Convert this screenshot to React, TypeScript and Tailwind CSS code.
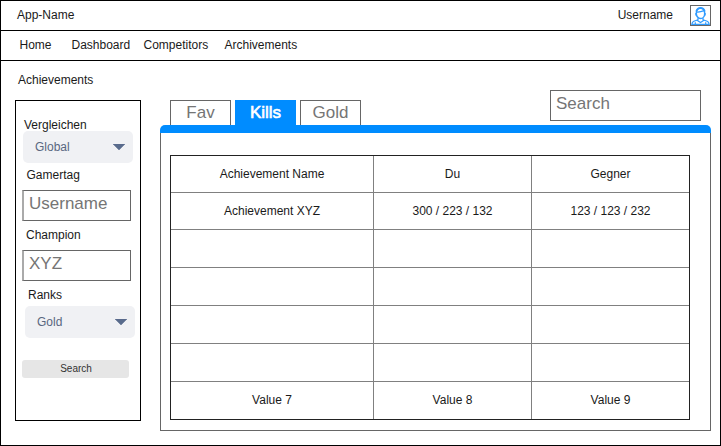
import type { ReactNode } from "react";

const rows = [
  ["Achievement Name", "Du", "Gegner"],
  ["Achievement XYZ", "300 / 223 / 132", "123 / 123 / 232"],
  ["", "", ""],
  ["", "", ""],
  ["", "", ""],
  ["", "", ""],
  ["Value 7", "Value 8", "Value 9"],
];

function UserIcon() {
  return (
    <svg viewBox="0 0 19 19" className="size-[19px]" fill="none" stroke="#2f9bff" strokeWidth="1.2">
      <ellipse cx="9.5" cy="7.4" rx="4.2" ry="5.2" strokeWidth="1.5" />
      <path d="M5.200 5.400C6 3 7.500 1.800 9.500 1.800s3.600 1.200 4.300 3.600" strokeWidth="1.700" />
      <path d="M5.600 6c2.600.2 5.200-.4 7.400-1.400" />
      <path d="M4.900 7v2.600M14.100 7v2.600" />
      <path d="M7 12v1.800l-4.200 1.500C1.600 15.800 1 16.800.8 18.400h17.400c-.2-1.600-.8-2.600-2-3.100L12 13.800V12" />
      <path d="M6 14.300l3.500 2.300 3.500-2.300M4.300 16.200v2.200M14.700 16.200v2.200" />
    </svg>
  );
}

function Select({ value, className }: { value: string; className: string }) {
  return (
    <div className={`flex items-center justify-between rounded-[5px] bg-[#f0f1f4] text-[#596780] ${className}`}>
      <span>{value}</span>
      <svg viewBox="0 0 12 6" className="h-[6px] w-[12px]" fill="#596b8c" stroke="#596b8c" strokeWidth="0.5">
        <path d="M0 0h12L6 6z" />
      </svg>
    </div>
  );
}

function Field({ value, className }: { value: string; className: string }) {
  return (
    <div className={`border border-[#666] bg-white px-[5px] text-[17px] leading-[25px] text-[#757575] ${className}`}>
      {value}
    </div>
  );
}

function Label({ className, children }: { className: string; children: ReactNode }) {
  return <div className={`leading-[14px] ${className}`}>{children}</div>;
}

export default function App() {
  return (
    <div className="flex h-[446px] w-[721px] flex-col border border-black bg-white font-['Liberation_Sans',Arial,sans-serif] text-[12px] text-[#1a1a1a]">
      <header className="flex h-[30px] shrink-0 items-center border-b border-black pr-[9px] pl-[16px]">
        <span className="pb-[2px]">App-Name</span>
        <span className="mr-[17px] ml-auto pb-[2px]">Username</span>
        <div className="size-[21px] border border-[#666]">
          <UserIcon />
        </div>
      </header>
      <nav className="flex h-[30px] shrink-0 items-center border-b border-black pb-[2px] pl-[18.5px]">
        <span className="w-[52px]">Home</span>
        <span className="w-[72px]">Dashboard</span>
        <span className="w-[81px]">Competitors</span>
        <span>Archivements</span>
      </nav>
      <main className="flex flex-1 pl-[14px]">
        <aside className="w-[126px] shrink-0">
          <h1 className="h-[39px] pl-[3px] leading-[38px]">Achievements</h1>
          <div className="h-[321px] border border-black pt-[17px]">
            <Label className="pl-[8px]">Vergleichen</Label>
            <Select value="Global" className="-mt-px ml-[7px] h-[32px] w-[110px] pr-[8px] pl-[12px]" />
            <Label className="mt-[5px] pl-[10.5px]">Gamertag</Label>
            <Field value="Username" className="mt-[8px] ml-[6px] h-[31px] w-[109px] border-l-2 border-l-[#aaa]" />
            <Label className="mt-[7px] pl-[10px]">Champion</Label>
            <Field value="XYZ" className="mt-[8px] ml-[6px] h-[31px] w-[109px] border-l-2 border-l-[#aaa]" />
            <Label className="mt-[7px] pl-[12px]">Ranks</Label>
            <Select value="Gold" className="mt-[4px] ml-[9px] h-[32px] w-[110px] pr-[8px] pl-[12px]" />
            <button className="mt-[22px] ml-[6px] block h-[18px] w-[107px] rounded-[3px] bg-[#e6e6e6] pl-px text-[10px] leading-[18px] text-[#333]">
              Search
            </button>
          </div>
        </aside>
        <section className="ml-[19px] w-[551px]">
          <div className="flex h-[64px] items-end pl-[10px] text-center text-[17px] leading-[25px] text-[#757575]">
            <div className="h-[25px] w-[61px] border border-b-0 border-[#666] leading-[23px]">Fav</div>
            <div className="ml-[4px] h-[25px] w-[61px] bg-[#008cff] text-white [-webkit-text-stroke:0.6px_white]">Kills</div>
            <div className="ml-[4px] h-[25px] w-[61px] border border-b-0 border-[#666] leading-[23px]">Gold</div>
            <Field value="Search" className="mr-[10px] mb-[4px] ml-auto h-[31px] w-[151px] text-left" />
          </div>
          <div className="h-[8px] rounded-t-[5px] bg-[#008cff]" />
          <div className="h-[298px] border border-t-0 border-[#666] pt-[22px] pl-[9px]">
            <div className="grid h-[265px] w-[520px] grid-cols-[203px_158px_157px] grid-rows-[37px_37px_38px_38px_38px_38px_37px] border border-[#222]">
              {rows.map((row, r) =>
                row.map((cell, c) => (
                  <div
                    key={`${r}-${c}`}
                    className={`flex items-center justify-center border-[#808080] ${r < 6 ? "border-b" : "pb-[2px]"} ${c < 2 ? "border-r" : ""}`}
                  >
                    {cell}
                  </div>
                )),
              )}
            </div>
          </div>
        </section>
      </main>
    </div>
  );
}
